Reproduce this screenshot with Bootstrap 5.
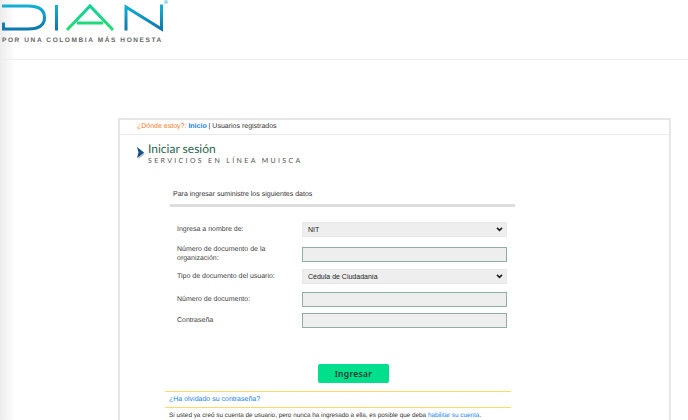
<!DOCTYPE html>
<html lang="es">
<head>
    <meta charset="UTF-8">
    <title>DIAN - Iniciar sesión</title>
    <link href="https://cdn.jsdelivr.net/npm/bootstrap@5.3.0/dist/css/bootstrap.min.css" rel="stylesheet">
    <style>
        html, body { height: 420px; overflow: hidden; }
        body { font-family: "Liberation Sans", Arial, sans-serif; font-size: 7px; color: #333; background: linear-gradient(90deg, #ececec, #fff 15px); text-rendering: geometricPrecision; }
        .top-head { height: 60px; border-bottom: 1px solid #eee; }
        .logo-art { display: block; width: 170px; height: 34px; }
        .logo-tag { font-size: 6.5px; font-weight: 700; letter-spacing: 1.6px; color: #666; line-height: 8px; margin: 3px 0 0 2px; white-space: nowrap; }
        .login-box { width: 553px; height: 302px; margin: 58px 0 0 118px; border: 2px solid #e6e6e6; border-bottom: 0; overflow: hidden; background: #fff; }
        .crumbs { height: 15px; padding-left: 17px; border-bottom: 1px solid #ebebeb; line-height: 13px; }
        .crumbs .here { color: #f47b20; }
        .crumbs a { color: #1a7ff0; font-weight: 700; text-decoration: none; }
        .title-area { padding: 7px 0 0 17px; }
        .arrow-mark { width: 8px; height: 12px; margin: 5px 3px 0 0; flex: none; }
        .main-title { font-family: Lato, sans-serif; font-size: 12px; line-height: 14px; color: #2c6650; }
        .sub-title { font-family: Lato, sans-serif; font-size: 7px; letter-spacing: 2.35px; line-height: 9px; margin-top: 1px; color: #555; white-space: nowrap; }
        .form-wrap { margin: 23px 0 0 50px; width: 345px; }
        .form-head { padding-left: 3px; height: 18px; line-height: 12px; border-bottom: 3px solid #ddd; margin-bottom: 15px; }
        .field-row { display: flex; align-items: center; padding-left: 7px; }
        .field-row.row-tight { margin-top: -2px; }
        .field-label { width: 125px; flex: none; line-height: 9px; color: #444; }
        .form-control.field-box, .form-select.field-box { width: 205px; height: 15px; min-height: 0; background-color: #eee; border-radius: 0; color: #222; font-size: 7px; line-height: 13px; }
        .form-control.field-box { border: 1px solid #8fb0a0; padding: 0 4px; }
        .form-select.field-box { border: 1px solid #e8e8e8; padding: 0 0 0 5px; background-image: url("data:image/svg+xml,%3csvg xmlns='http://www.w3.org/2000/svg' viewBox='0 0 8 6'%3e%3cpath fill='none' stroke='%23222' stroke-width='2' d='M1 1l3 3 3-3'/%3e%3c/svg%3e"); background-position: right 3px center; background-size: 7px 5px; }
        .btn.btn-login { display: block; width: 71px; height: 19px; margin: 36px 0 0 198px; padding: 0; background: #00df8c; border: 0; border-radius: 2px; font-family: "Noto Sans", sans-serif; font-weight: 600; font-size: 8.5px; line-height: 19px; letter-spacing: .3px; color: #1f3d33; }
        .help-wrap { margin: 8px 0 0 45px; width: 346px; }
        .help-line { border-top: 1px solid #ffd966; height: 16px; line-height: 15px; padding-left: 4px; white-space: nowrap; }
        .help-line a { color: #1a7ff0; text-decoration: none; }
        .help-note { font-size: 6.35px; }
    </style>
</head>
<body>
    <div class="top-head">
        <svg class="logo-art" viewBox="0 0 170 34" aria-label="Logo DIAN">
            <defs>
                <linearGradient id="blueGrad" gradientUnits="userSpaceOnUse" x1="0" y1="4" x2="0" y2="31">
                    <stop offset="0" stop-color="#12b4d6"/><stop offset="1" stop-color="#0e74ab"/>
                </linearGradient>
                <linearGradient id="greenGrad" gradientUnits="userSpaceOnUse" x1="0" y1="4" x2="0" y2="31">
                    <stop offset="0" stop-color="#14cf9c"/><stop offset="1" stop-color="#22de6c"/>
                </linearGradient>
            </defs>
            <g fill="none" stroke-width="3">
                <path d="M3.5 22.5V29H28Q44.5 29 44.5 17.5T28 6H2" stroke="url(#blueGrad)"/>
                <path d="M56.5 5V30.5" stroke="url(#blueGrad)"/>
                <path d="M67 30L90 6L113 30M77 23H103" stroke="url(#greenGrad)"/>
                <path d="M126 30.5V7L161.5 29V4.5" stroke="url(#blueGrad)"/>
            </g>
            <circle cx="166" cy="2" r="2" fill="#9fd8ea"/>
        </svg>
        <div class="logo-tag">POR UNA COLOMBIA MÁS HONESTA</div>
    </div>
    <div class="login-box">
        <div class="crumbs"><span class="here">¿Dónde estoy?:</span> <a href="#">Inicio</a> | Usuarios registrados</div>
        <div class="title-area d-flex">
            <svg class="arrow-mark" viewBox="0 0 8 12">
                <path d="M1 1.5L8 7L1 12L2.5 7Z" fill="#bbb"/>
                <path d="M0 0L7 5.5L0 11L1.5 5.5Z" fill="#10508f"/>
            </svg>
            <div>
                <div class="main-title">Iniciar sesión</div>
                <div class="sub-title">SERVICIOS EN LÍNEA MUISCA</div>
            </div>
        </div>
        <div class="form-wrap">
            <div class="form-head">Para ingresar suministre los siguientes datos</div>
            <div class="d-flex flex-column gap-2">
                <div class="field-row"><label class="field-label">Ingresa a nombre de:</label><select class="form-select field-box"><option>NIT</option></select></div>
                <div class="field-row"><label class="field-label">Número de documento de la organización:</label><input class="form-control field-box" type="text"></div>
                <div class="field-row row-tight"><label class="field-label">Tipo de documento del usuario:</label><select class="form-select field-box"><option>Cédula de Ciudadanía</option></select></div>
                <div class="field-row"><label class="field-label">Número de documento:</label><input class="form-control field-box" type="text"></div>
                <div class="field-row row-tight"><label class="field-label">Contraseña</label><input class="form-control field-box" type="password"></div>
            </div>
        </div>
        <button class="btn btn-login" type="button">Ingresar</button>
        <div class="help-wrap">
            <div class="help-line"><a href="#">¿Ha olvidado su contraseña?</a></div>
            <div class="help-line help-note">Si usted ya creó su cuenta de usuario, pero nunca ha ingresado a ella, es posible que deba <a href="#">habilitar su cuenta</a>.</div>
        </div>
    </div>
    <script src="https://cdn.jsdelivr.net/npm/bootstrap@5.3.0/dist/js/bootstrap.bundle.min.js"></script>
</body>
</html>
